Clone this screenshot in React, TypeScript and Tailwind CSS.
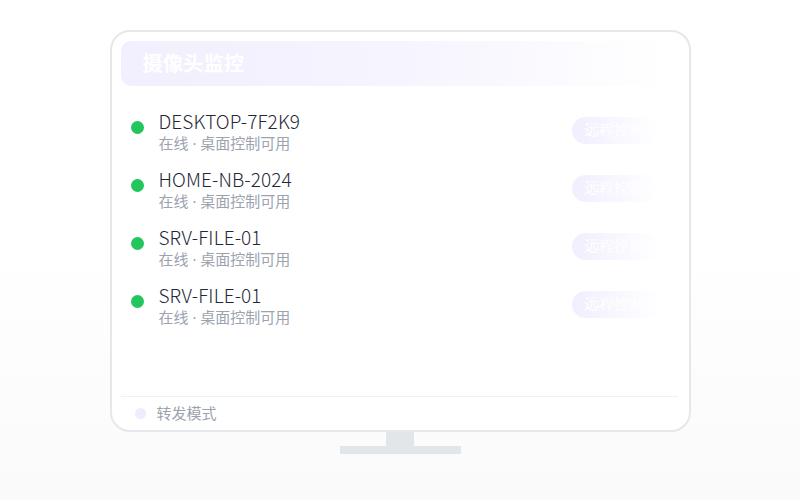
const devices = [
  { name: "DESKTOP-7F2K9", status: "在线 · 桌面控制可用" },
  { name: "HOME-NB-2024", status: "在线 · 桌面控制可用" },
  { name: "SRV-FILE-01", status: "在线 · 桌面控制可用" },
  { name: "SRV-FILE-01", status: "在线 · 桌面控制可用" },
];

const sans = { fontFamily: '"Noto Sans", "Noto Sans CJK SC", sans-serif' };
const nameFont = { fontFamily: '"Noto Sans CJK SC", "Noto Sans", sans-serif' };

const App = () => {
  return (
    <div
      className="w-[800px] h-[500px] bg-gradient-to-b from-white via-white to-[#fafafb] flex flex-col items-center pt-[30px]"
      style={sans}
    >
      {/* 显示器 */}
      <div className="w-[581px] h-[402px] border-2 border-[#e5e7eb] rounded-[20px] bg-white px-[9px] pt-[9px] flex flex-col">
        <div className="h-[45px] rounded-[10px] bg-gradient-to-r from-[#f2effe] via-[#f6f4fe] to-transparent flex items-center pl-[22px] mr-[8px]">
          <span className="text-white text-[20px] font-bold tracking-[0.4px]">摄像头监控</span>
        </div>
        <div className="mt-[12px] flex flex-col">
          {devices.map((d, i) => (
            <div key={i} className="h-[58px] flex items-center">
              <div className="ml-[10px] w-[13px] h-[13px] rounded-full bg-[#22c55e]" />
              <div className="ml-[15px] flex flex-col flex-1 mt-[7px]">
                <div className="text-[19px] leading-[25px] tracking-[0.1px] font-light text-[#1f2937]" style={nameFont}>
                  {d.name}
                </div>
                <div className="text-[15px] leading-[20px] text-[#9ca3af]">{d.status}</div>
              </div>
              <div className="mr-[20px] mt-[7px] w-[88px] h-[27px] rounded-full bg-gradient-to-r from-[#f1eefe] to-white flex items-center pl-[12px]">
                <span className="text-white text-[15px] font-serif">远程控制</span>
              </div>
            </div>
          ))}
        </div>
        <div className="flex-1" />
        <div className="h-px bg-[#eef0f3] mr-[2px]" />
        <div className="h-[33px] flex items-center">
          <div className="ml-[14px] w-[11px] h-[11px] rounded-full bg-[#efecfd]" />
          <span className="ml-[11px] text-[15px] text-[#9ca3af]">转发模式</span>
        </div>
      </div>
      {/* 支架 */}
      <div className="w-[28px] h-[14px] bg-[#e2e5e9]" />
      <div className="w-[121px] h-[8px] bg-[#e2e5e9]" />
    </div>
  );
};

export default App;
